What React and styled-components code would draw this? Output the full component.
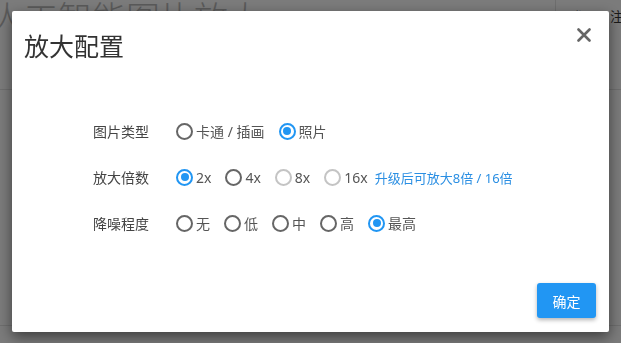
import React, { useState } from 'react'
import styled, { createGlobalStyle, css } from 'styled-components'

const GlobalStyle = createGlobalStyle`
  html, body {
    margin: 0;
    padding: 0;
  }
  body {
    font-family: "Noto Sans", "Noto Sans CJK SC", sans-serif;
    background: #f6f6f6;
    overflow: hidden;
  }
`

const options = {
  type: [
    { value: 'cartoon', label: '卡通 / 插画' },
    { value: 'photo', label: '照片' },
  ],
  scale: [
    { value: '2', label: '2x' },
    { value: '4', label: '4x' },
    { value: '8', label: '8x', disabled: true },
    { value: '16', label: '16x', disabled: true },
  ],
  noise: [
    { value: 'none', label: '无' },
    { value: 'low', label: '低' },
    { value: 'mid', label: '中' },
    { value: 'high', label: '高' },
    { value: 'max', label: '最高' },
  ],
}

export default function App() {
  const [type, setType] = useState('photo')
  const [scale, setScale] = useState('2')
  const [noise, setNoise] = useState('max')

  return (
    <>
      <GlobalStyle />
      <Page>
        <Header>
          <SiteTitle>人工智能图片放大</SiteTitle>
          <HeaderNav>
            <NavLink>登录</NavLink>
            <NavLink>注册</NavLink>
          </HeaderNav>
        </Header>
        <Main />
      </Page>

      <Overlay>
        <Dialog>
          <Title>放大配置</Title>
          <CloseButton aria-label='close'>
            <svg width='14' height='14' viewBox='0 0 14 14'>
              <path d='M1.5 1.5 L12.5 12.5 M12.5 1.5 L1.5 12.5' stroke='#666' strokeWidth='2.6' strokeLinecap='round' />
            </svg>
          </CloseButton>

          <Body>
            <Row>
              <Label>图片类型</Label>
              <Options>
                {options.type.map(o => (
                  <Radio key={o.value} {...o} checked={type === o.value} onPick={setType} />
                ))}
              </Options>
            </Row>
            <Row>
              <Label>放大倍数</Label>
              <Options>
                {options.scale.map(o => (
                  <Radio key={o.value} {...o} checked={scale === o.value} onPick={setScale} />
                ))}
                <UpgradeLink>升级后可放大8倍 / 16倍</UpgradeLink>
              </Options>
            </Row>
            <Row>
              <Label>降噪程度</Label>
              <Options>
                {options.noise.map(o => (
                  <Radio key={o.value} {...o} checked={noise === o.value} onPick={setNoise} />
                ))}
              </Options>
            </Row>
          </Body>

          <Footer>
            <PrimaryButton>确定</PrimaryButton>
          </Footer>
        </Dialog>
      </Overlay>
    </>
  )
}

function Radio({ value, label, checked, disabled, onPick }) {
  return (
    <RadioLabel onClick={() => !disabled && onPick(value)}>
      <Circle $checked={checked} $disabled={disabled} />
      {label}
    </RadioLabel>
  )
}

// Styled Components
const Page = styled.div`
  min-height: 100vh;
  background: #f6f6f6;
`

const Header = styled.header`
  height: 89px;
  display: flex;
  align-items: flex-start;
  border-bottom: 1px solid #dcdcdc;
`

const SiteTitle = styled.h1`
  margin: 0 0 0 -10px;
  font-size: 34px;
  line-height: 34px;
  font-weight: 300;
  color: #b4b4b4;
  font-family: "Noto Sans CJK SC", sans-serif;
`

const HeaderNav = styled.nav`
  margin-left: auto;
  width: 66px;
  height: 89px;
  box-sizing: border-box;
  padding: 9px 0 0 14px;
  display: flex;
  gap: 14px;
  border-left: 1px solid #dcdcdc;
  white-space: nowrap;
  overflow: hidden;
`

const NavLink = styled.a`
  font-size: 13px;
  line-height: 14px;
  color: #333;
  font-family: "Noto Sans CJK SC", sans-serif;
`

const Main = styled.main`
  height: 235px;
  border-bottom: 1px solid #dcdcdc;
`

const Overlay = styled.div`
  position: fixed;
  inset: 0;
  background: rgba(0, 0, 0, 0.5);
  display: flex;
  align-items: center;
  justify-content: center;
`

const Dialog = styled.div`
  position: relative;
  width: 597px;
  height: 321px;
  background: #fff;
  border-radius: 2px;
  box-shadow: 0 5px 14px rgba(0, 0, 0, 0.5);
  display: flex;
  flex-direction: column;
  box-sizing: border-box;
`

const Title = styled.h2`
  margin: 0;
  padding: 16px 12px 0;
  font-size: 25px;
  line-height: 36px;
  font-weight: 400;
  color: #333;
  font-family: "Noto Sans CJK SC", sans-serif;
`

const CloseButton = styled.button`
  position: absolute;
  top: 17px;
  right: 18px;
  width: 14px;
  height: 14px;
  padding: 0;
  border: 0;
  background: transparent;
  cursor: pointer;
  display: flex;
`

const Body = styled.div`
  padding: 56px 0 0 81px;
  display: flex;
  flex-direction: column;
  gap: 22px;
`

const Row = styled.div`
  display: grid;
  grid-template-columns: 83px auto;
  align-items: center;
  height: 24px;
`

const Label = styled.span`
  font-size: 14px;
  color: #444;
  font-family: "Noto Sans CJK SC", sans-serif;
`

const Options = styled.div`
  display: flex;
  align-items: center;
`

const RadioLabel = styled.label`
  display: flex;
  align-items: center;
  gap: 3px;
  margin-right: 14px;
  font-size: 14px;
  color: #555;
  cursor: pointer;
  white-space: nowrap;
`

const Circle = styled.span`
  position: relative;
  width: 17px;
  height: 17px;
  box-sizing: border-box;
  border-radius: 50%;
  border: 2px solid #666;
  flex-shrink: 0;
  ${p => p.$disabled && css`
    border-color: #c4c4c4;
  `}
  ${p => p.$checked && css`
    border-color: #2196f3;
    &::after {
      content: '';
      position: absolute;
      inset: 2.5px;
      border-radius: 50%;
      background: #2196f3;
    }
  `}
`

const UpgradeLink = styled.a`
  margin-left: -7px;
  font-size: 13px;
  color: #2b8fe3;
  cursor: pointer;
  white-space: nowrap;
`

const Footer = styled.div`
  margin-top: auto;
  display: flex;
  justify-content: flex-end;
  padding: 0 13px 14px;
`

const PrimaryButton = styled.button`
  width: 59px;
  height: 35px;
  border: 0;
  border-radius: 3px;
  background: #2196f3;
  color: #fff;
  font-size: 14px;
  font-family: "Noto Sans CJK SC", sans-serif;
  box-shadow: 0 2px 4px rgba(0, 0, 0, 0.3);
  cursor: pointer;
`
